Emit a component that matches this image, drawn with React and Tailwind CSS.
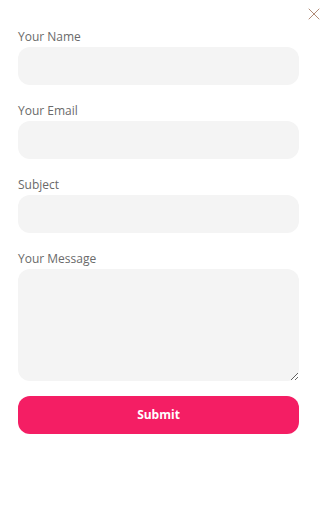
import { X } from "lucide-react"

const Field = ({ label, textarea }) => (
  <div className="flex flex-col">
    <label className="text-[12px] leading-[16px] text-[#6a6a6a] mb-[2px]">{label}</label>
    {textarea ? (
      <textarea className="h-[112px] w-full rounded-[12px] bg-[#f4f4f4] outline-none p-3" />
    ) : (
      <input className="h-[38px] w-full rounded-[12px] bg-[#f4f4f4] outline-none px-3" />
    )}
  </div>
)

const App = () => {
  return (
    <div className="relative w-[325px] h-[523px] bg-white" style={{ fontFamily: '"Open Sans", sans-serif' }}>
      <button className="absolute right-[1px] top-[4px] text-[#a8806a]">
        <X size={20} strokeWidth={1.1} />
      </button>
      <form className="flex flex-col pt-[29px] pl-[18px] pr-[26px]">
        <div className="flex flex-col gap-[18px]">
          <Field label="Your Name" />
          <Field label="Your Email" />
          <Field label="Subject" />
          <Field label="Your Message" textarea />
        </div>
        <button
          type="button"
          className="mt-[15px] h-[38px] w-full rounded-[12px] bg-[#f41e64] text-white text-[12px] font-bold"
        >
          Submit
        </button>
      </form>
    </div>
  )
}

export default App
